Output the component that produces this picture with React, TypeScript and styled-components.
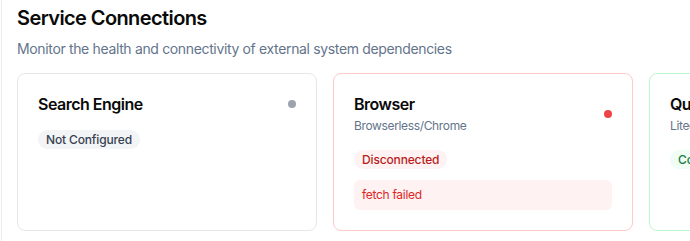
import React from "react";
import styled, { createGlobalStyle } from "styled-components";

const Global = createGlobalStyle`
  html, body { margin: 0; padding: 0; background: #ffffff; }
  body { font-family: Inter, "Noto Sans", sans-serif; overflow: hidden; }
  * { box-sizing: border-box; }
`;

const Page = styled.div`
  margin-left: 1px;
  border-left: 1px solid #e8ecf2;
  padding: 4px 0 20px 15px;
  min-height: 241px;
`;

const Heading = styled.h1`
  margin: 0;
  font-size: 20px;
  line-height: 28px;
  font-weight: 600;
  letter-spacing: -0.6px;
  color: #0a0a0a;
`;

const Lead = styled.p`
  margin: 7px 0 0;
  font-size: 14px;
  line-height: 20px;
  letter-spacing: -0.35px;
  color: #64748b;
`;

const Row = styled.div`
  display: flex;
  gap: 16px;
  margin-top: 14px;
  overflow: hidden;
  align-items: stretch;
`;

type Tone = "neutral" | "danger" | "success";

const borders: Record<Tone, string> = {
  neutral: "#e5e7eb",
  danger: "#fecaca",
  success: "#bbf7d0",
};

const Card = styled.div<{ $tone: Tone }>`
  flex: 0 0 300px;
  display: flex;
  flex-direction: column;
  align-items: flex-start;
  border: 1px solid ${(p) => borders[p.$tone]};
  border-radius: 8px;
  padding: 20px;
  background: #fff;
`;

const Header = styled.div`
  align-self: stretch;
  display: flex;
  align-items: center;
  justify-content: space-between;
  margin-bottom: 16px;
`;

const Names = styled.div`
  display: flex;
  flex-direction: column;
`;

const Title = styled.div`
  font-size: 16px;
  line-height: 20px;
  font-weight: 600;
  letter-spacing: -0.5px;
  color: #0a0a0a;
`;

const Sub = styled.div`
  margin-top: 4px;
  font-size: 12px;
  line-height: 16px;
  letter-spacing: -0.35px;
  color: #64748b;
`;

const dotColors: Record<Tone, string> = {
  neutral: "#9ca3af",
  danger: "#ef4444",
  success: "#22c55e",
};

const Dot = styled.span<{ $tone: Tone }>`
  width: 8px;
  height: 8px;
  border-radius: 50%;
  background: ${(p) => dotColors[p.$tone]};
  flex: none;
`;

const badge: Record<Tone, { bg: string; fg: string }> = {
  neutral: { bg: "#f3f4f6", fg: "#374151" },
  danger: { bg: "#fef2f2", fg: "#b91c1c" },
  success: { bg: "#f0fdf4", fg: "#15803d" },
};

const Badge = styled.span<{ $tone: Tone }>`
  display: inline-flex;
  padding: 2px 8px;
  border-radius: 999px;
  font-size: 12px;
  line-height: 15px;
  font-weight: 500;
  letter-spacing: -0.15px;
  white-space: nowrap;
  background: ${(p) => badge[p.$tone].bg};
  color: ${(p) => badge[p.$tone].fg};
`;

const ErrorBox = styled.div`
  align-self: stretch;
  margin-top: 11px;
  padding: 7px 8px;
  border-radius: 6px;
  background: #fef2f2;
  color: #dc2626;
  font-size: 12px;
  line-height: 16px;
  letter-spacing: -0.3px;
`;

type Service = {
  name: string;
  sub?: string;
  tone: Tone;
  status: string;
  error?: string;
};

const services: Service[] = [
  { name: "Search Engine", tone: "neutral", status: "Not Configured" },
  {
    name: "Browser",
    sub: "Browserless/Chrome",
    tone: "danger",
    status: "Disconnected",
    error: "fetch failed",
  },
  { name: "Queue", sub: "Litequeue", tone: "success", status: "Connected" },
];

export default function App() {
  return (
    <>
      <Global />
      <Page>
        <Heading>Service Connections</Heading>
        <Lead>Monitor the health and connectivity of external system dependencies</Lead>
        <Row>
          {services.map((s) => (
            <Card key={s.name} $tone={s.tone}>
              <Header>
                <Names>
                  <Title>{s.name}</Title>
                  {s.sub && <Sub>{s.sub}</Sub>}
                </Names>
                <Dot $tone={s.tone} />
              </Header>
              <Badge $tone={s.tone}>{s.status}</Badge>
              {s.error && <ErrorBox>{s.error}</ErrorBox>}
            </Card>
          ))}
        </Row>
      </Page>
    </>
  );
}
